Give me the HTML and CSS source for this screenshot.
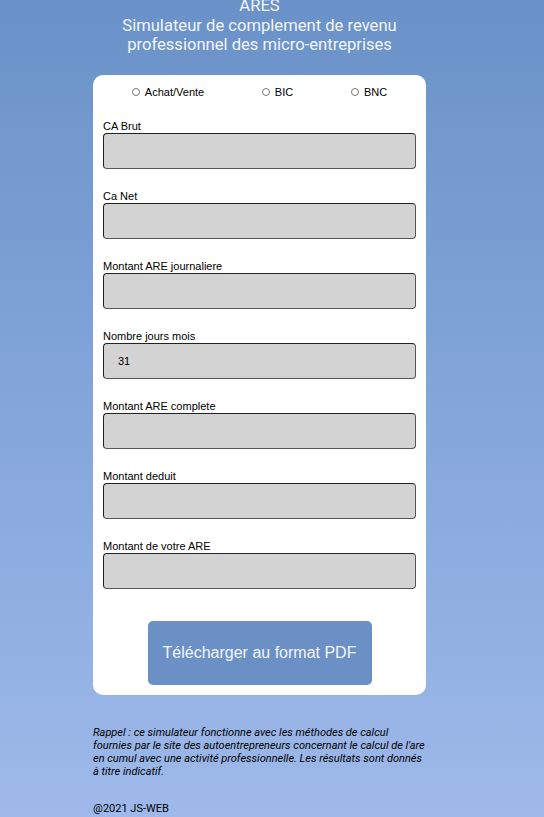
FILE: index.html
```html
<!DOCTYPE html>
<html lang="fr">
<head>
<meta charset="utf-8">
<title>ARES</title>
<link rel="stylesheet" href="styles.css">
</head>
<body>
<header class="header">
  <h1 class="title">ARES<br>Simulateur de complement de revenu<br>professionnel des micro-entreprises</h1>
</header>
<main class="card">
  <div class="radios">
    <label class="radio"><input type="radio" name="type" class="radio-input">Achat/Vente</label>
    <label class="radio"><input type="radio" name="type" class="radio-input">BIC</label>
    <label class="radio"><input type="radio" name="type" class="radio-input">BNC</label>
  </div>
  <div class="field"><label class="field-label">CA Brut</label><input class="field-input" type="text"></div>
  <div class="field"><label class="field-label">Ca Net</label><input class="field-input" type="text"></div>
  <div class="field"><label class="field-label">Montant ARE journaliere</label><input class="field-input" type="text"></div>
  <div class="field"><label class="field-label">Nombre jours mois</label><input class="field-input" type="text" value="31"></div>
  <div class="field"><label class="field-label">Montant ARE complete</label><input class="field-input" type="text"></div>
  <div class="field"><label class="field-label">Montant deduit</label><input class="field-input" type="text"></div>
  <div class="field"><label class="field-label">Montant de votre ARE</label><input class="field-input" type="text"></div>
  <div class="actions"><button class="pdf-btn" type="button">Télécharger au format PDF</button></div>
</main>
<footer class="footer">
  <p class="note">Rappel : ce simulateur fonctionne avec les méthodes de calcul fournies par le site des autoentrepreneurs concernant le calcul de l'are en cumul avec une activité professionnelle. Les résultats sont donnés à titre indicatif.</p>
  <p class="copy">@2021 JS-WEB</p>
</footer>
</body>
</html>
```
FILE: styles.css
```css
html, body {
  margin: 0;
  padding: 0;
}
body {
  min-height: 817px;
  background: linear-gradient(to bottom, #6a92c8 0%, #9eb9ea 100%);
  font-family: Roboto, "Liberation Sans", sans-serif;
  color: #000;
  overflow: hidden;
}
.header {
  width: 519px;
  display: flex;
  justify-content: center;
}
.title {
  margin: -4px 0 0;
  font-weight: 400;
  font-size: 16.6px;
  line-height: 19.5px;
  color: #f2f5fc;
  text-align: center;
}
.card {
  width: 333px;
  box-sizing: border-box;
  margin: 20px 0 0 93px;
  background: #fff;
  border-radius: 10px;
  padding: 10px 10px 10px 10px;
  display: flex;
  flex-direction: column;
  gap: 20px;
}
.radios {
  display: flex;
  justify-content: space-around;
  height: 14px;
  align-items: center;
}
.radio {
  display: flex;
  align-items: center;
  font-family: "Liberation Sans", Arial, sans-serif;
  font-size: 11px;
}
.radio-input {
  width: 8px;
  height: 8px;
  margin: 0 5px 0 0;
}
.field {
  display: flex;
  flex-direction: column;
}
.field-label {
  font-family: "Liberation Sans", Arial, sans-serif;
  font-size: 11px;
  line-height: 14px;
}
.field-input {
  box-sizing: border-box;
  height: 36px;
  width: 313px;
  margin: 0;
  background: #d3d3d3;
  border: 1px solid #555;
  border-top-color: #222;
  border-left-color: #222;
  border-radius: 4px;
  padding: 0 14px;
  font-family: "Liberation Sans", Arial, sans-serif;
  font-size: 11px;
  color: #000;
}
.actions {
  display: flex;
  justify-content: center;
  padding-top: 12px;
}
.pdf-btn {
  width: 224px;
  height: 64px;
  border: none;
  border-radius: 5px;
  background: #6a90c6;
  color: #f3f6fc;
  font-family: "Liberation Sans", Arial, sans-serif;
  font-size: 16px;
}
.footer {
  margin-left: 93px;
  width: 333px;
}
.note {
  margin: 31px 0 0;
  font-style: italic;
  font-size: 11px;
  line-height: 13.2px;
}
.copy {
  margin: 24px 0 0;
  font-size: 11px;
  line-height: 13px;
}
```
